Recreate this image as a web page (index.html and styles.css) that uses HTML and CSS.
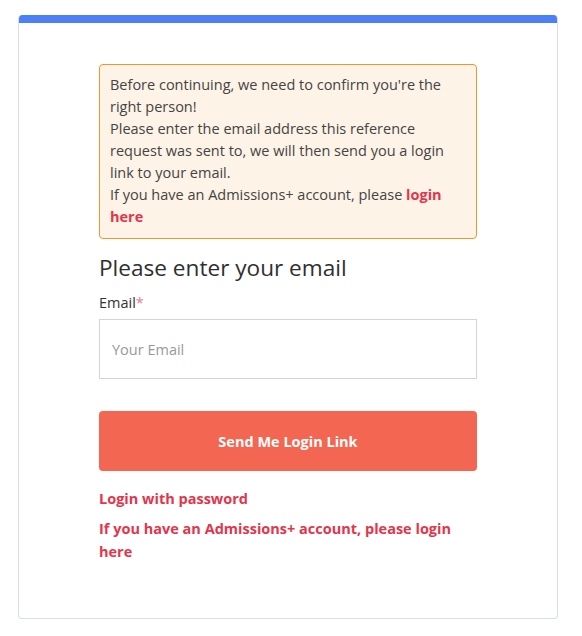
FILE: index.html
```html
<!DOCTYPE html>
<html lang="en">
<head>
	<meta charset="UTF-8">
	<title>Confirm your email</title>
	<link rel="stylesheet" href="styles.css">
</head>
<body>

	<div class="card">
		<div class="card-body">
			<div class="notice">
				Before continuing, we need to confirm you're the right person!<br/>
				Please enter the email address this reference request was sent to, we will then send you a login link to your email.<br/>
				If you have an Admissions+ account, please <a href="#" class="link">login here</a>
			</div>

			<h2 class="tit">Please enter your email</h2>

			<form class="form">
				<label class="label" for="email">Email<span class="req">*</span></label>
				<input class="input" id="email" type="email" placeholder="Your Email">
				<button class="btn" type="button">Send Me Login Link</button>
			</form>

			<a href="#" class="link link-block">Login with password</a>
			<a href="#" class="link link-block">If you have an Admissions+ account, please login here</a>
		</div>
	</div><!-- .card -->

</body>
</html>
```

FILE: styles.css
```css
body{ margin: 0; padding: 15px 24px 17px 18px; font-family: "Open Sans", "Liberation Sans", sans-serif; color: #3a3a3a; background: #fff;}
.card{ width: 540px; height: 604px; box-sizing: border-box; border: 1px solid #d5e0e4; border-top: 0; border-radius: 4px; overflow: hidden;}
.card::before{ content: ""; display: block; margin: 0 -1px; height: 8px; background: #4d80f6; border-radius: 4px 4px 0 0;}
.card-body{ padding: 41px 80px 0 80px;}
.notice{ padding: 9px 10px 10px; font-size: 14.5px; line-height: 22px; color: #444; background: #fdf3e7; border: 1px solid #f0962a; border-radius: 4px;}
.link{ font-weight: bold; color: #e3354b; text-decoration: none;}
.link-block{ display: block; font-size: 14.5px; line-height: 23px;}
.link-block + .link-block{ margin-top: 7px;}
.tit{ margin: 14px 0 0; font-size: 22.6px; font-weight: 500; line-height: 30px; color: #2f2f2f;}
.form{ margin: 10px 0 0;}
.label{ display: block; font-size: 14.5px; line-height: 20px; color: #333;}
.req{ color: #f07a8a;}
.input{ display: block; margin: 6px 0 0; padding: 0 12px; width: 100%; height: 60px; box-sizing: border-box; font-family: inherit; font-size: 14.5px; color: #333; border: 1px solid #d4d4d4; border-radius: 0; outline: none;}
.input::placeholder{ color: #999;}
.btn{ display: block; margin: 32px 0 16px; width: 100%; height: 60px; font-family: inherit; font-size: 14.5px; font-weight: bold; color: #fff; background: #f26652; border: 0; border-radius: 4px; cursor: pointer;}
```
